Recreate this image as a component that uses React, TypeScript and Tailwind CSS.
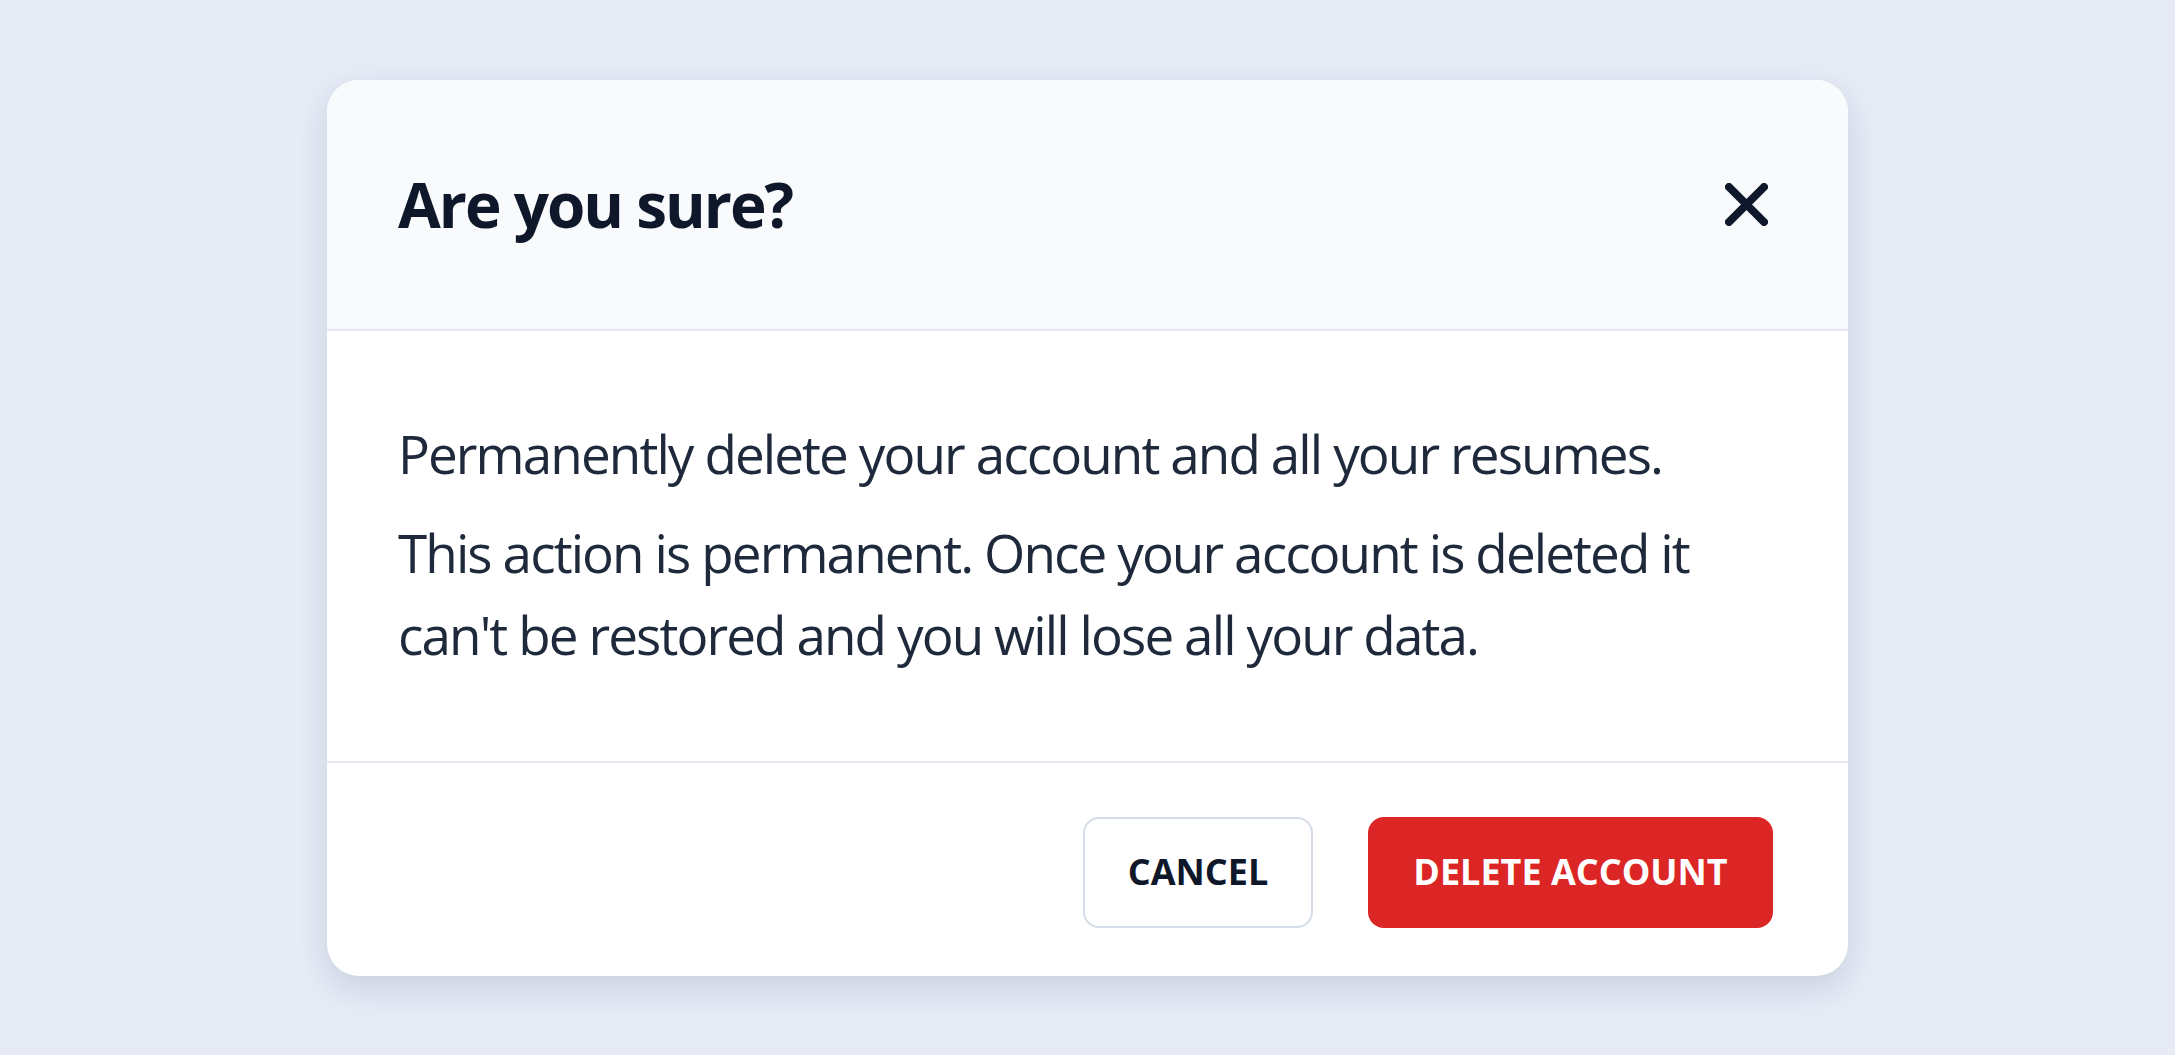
import React from "react";

export default function App() {
  return (
    <div className="flex h-[1055px] w-full items-center justify-center bg-[#e6ebf6] font-['Open_Sans',sans-serif]">
      <div className="w-[1521px] overflow-hidden rounded-[32px] bg-white shadow-[0_12px_32px_rgba(30,41,80,0.14)]">
        <div className="flex h-[251px] items-center justify-between border-b-2 border-[#e5e9f0] bg-[#f8fafc] pl-[71px] pr-[80px]">
          <h2 className="text-[62px] font-bold leading-none tracking-[-2px] text-[#0f172a]">Are you sure?</h2>
          <button aria-label="Close" className="flex items-center justify-center">
            <svg width="43" height="43" viewBox="0 0 43 43" fill="none">
              <path d="M4 4 L39 39 M39 4 L4 39" stroke="#0f172a" strokeWidth="8" strokeLinecap="round" />
            </svg>
          </button>
        </div>
        <div className="flex flex-col gap-[17px] px-[71px] pt-[82px] pb-[85px] text-[53px] leading-[82px] tracking-[-1.9px] text-[#1e293b]">
          <p>Permanently delete your account and all your resumes.</p>
          <p className="whitespace-nowrap">
            This action is permanent. Once your account is deleted it
            <br />
            can't be restored and you will lose all your data.
          </p>
        </div>
        <div className="flex justify-end gap-[55px] border-t-2 border-[#e5e9f0] pt-[54px] pb-[48px] pl-[71px] pr-[75px]">
          <button className="flex h-[111px] w-[230px] items-center justify-center rounded-[16px] border-2 border-[#d5dce7] bg-white text-[36px] font-bold text-[#0f172a]">
            CANCEL
          </button>
          <button className="flex h-[111px] w-[405px] items-center justify-center rounded-[16px] bg-[#dc2626] text-[36px] font-bold text-white">
            DELETE ACCOUNT
          </button>
        </div>
      </div>
    </div>
  );
}
